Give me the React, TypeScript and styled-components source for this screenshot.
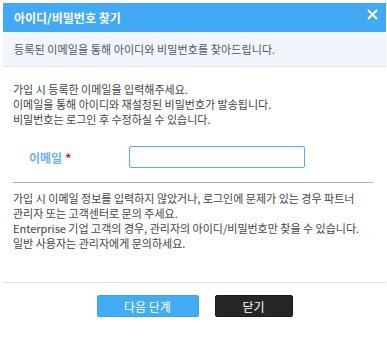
import React from "react";
import styled, { createGlobalStyle } from "styled-components";

const Global = createGlobalStyle`
  html, body { margin: 0; padding: 0; background: #fff; }
  body { font-family: "Noto Sans CJK KR", "Noto Sans", sans-serif; }
  * { box-sizing: border-box; }
`;

const Dialog = styled.div`
  width: 383px;
  margin: 3px 0 0 3px;
  background: #fff;
`;

const Header = styled.div`
  height: 29px;
  background: #42aaf4;
  display: flex;
  align-items: center;
  justify-content: space-between;
  padding: 0 8px 0 11px;
`;

const Title = styled.h1`
  margin: 0;
  font-size: 12px;
  font-weight: 700;
  color: #fff;
`;

const Close = styled.button`
  align-self: flex-start;
  margin-top: 6px;
  width: 11px;
  height: 11px;
  padding: 0;
  border: 0;
  background: none;
  display: block;
  line-height: 0;
`;

const SubHeader = styled.div`
  height: 35px;
  background: #f1f5fd;
  border-bottom: 1px solid #e4e6ea;
  display: flex;
  align-items: center;
  padding-left: 11px;
  font-size: 11px;
  color: #555;
  letter-spacing: 0.1px;
`;

const Content = styled.div`
  padding: 15px 10px 0 10px;
`;

const Paragraph = styled.p`
  margin: 0;
  font-size: 11px;
  line-height: 15px;
  color: #444;
`;

const FormRow = styled.div`
  display: flex;
  align-items: center;
  margin-top: 19px;
`;

const Label = styled.label`
  width: 116px;
  padding-left: 16px;
  font-size: 12px;
  font-weight: 700;
  color: #6cb2f5;
`;

const Star = styled.span`
  color: #e8102a;
  margin-left: 3px;
`;

const Input = styled.input`
  width: 176px;
  height: 22px;
  border: 1px solid #4db3f5;
  border-radius: 2px;
  outline: none;
  padding: 0 6px;
`;

const Divider = styled.hr`
  margin: 14px 0 8px;
  border: 0;
  border-top: 1px solid #b0b0b0;
  width: 360px;
`;

const Footer = styled.div`
  margin-top: 31px;
  border-top: 1px solid #e2e2e2;
  padding: 12px 0 24px;
  display: flex;
  justify-content: center;
  gap: 16px;
`;

const Button = styled.button<{ $variant: "primary" | "dark"; $w: number }>`
  width: ${(p) => p.$w}px;
  height: 22px;
  border-radius: 2px;
  border: 1px solid ${(p) => (p.$variant === "primary" ? "#3ba3ec" : "#1a1a1a")};
  background: ${(p) => (p.$variant === "primary" ? "#42acf4" : "#262626")};
  color: #fff;
  font-family: "Noto Sans CJK KR", sans-serif;
  font-size: 12px;
  padding: 0;
`;

export default function App() {
  return (
    <>
      <Global />
      <Dialog>
        <Header>
          <Title>아이디/비밀번호 찾기</Title>
          <Close aria-label="닫기">
            <svg width="11" height="11" viewBox="0 0 11 11">
              <path d="M1 1 L10 10 M10 1 L1 10" stroke="#fff" strokeWidth="2" />
            </svg>
          </Close>
        </Header>
        <SubHeader>등록된 이메일을 통해 아이디와 비밀번호를 찾아드립니다.</SubHeader>
        <Content>
          <Paragraph>
            가입 시 등록한 이메일을 입력해주세요.
            <br />
            이메일을 통해 아이디와 재설정된 비밀번호가 발송됩니다.
            <br />
            비밀번호는 로그인 후 수정하실 수 있습니다.
          </Paragraph>
          <FormRow>
            <Label>
              이메일<Star>*</Star>
            </Label>
            <Input type="text" />
          </FormRow>
          <Divider />
          <Paragraph>
            가입 시 이메일 정보를 입력하지 않았거나, 로그인에 문제가 있는 경우 파트너
            <br />
            관리자 또는 고객센터로 문의 주세요.
            <br />
            Enterprise 기업 고객의 경우, 관리자의 아이디/비밀번호만 찾을 수 있습니다.
            <br />
            일반 사용자는 관리자에게 문의하세요.
          </Paragraph>
        </Content>
        <Footer>
          <Button $variant="primary" $w={102}>다음 단계</Button>
          <Button $variant="dark" $w={78}>닫기</Button>
        </Footer>
      </Dialog>
    </>
  );
}
